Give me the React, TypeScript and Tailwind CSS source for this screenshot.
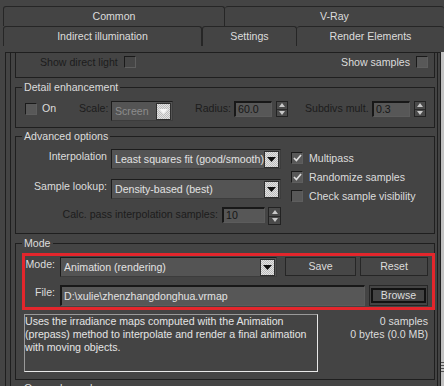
import type { ReactNode } from 'react';

const line = 'border-[#1f1f1f]';

const Tab = ({ children, className }: { children: ReactNode; className: string }) => (
  <div
    className={`flex h-[20px] items-center justify-center rounded-t-[3px] border-t border-[#262626] ${className}`}
  >
    {children}
  </div>
);

const Check = ({ checked, dim }: { checked?: boolean; dim?: boolean }) => (
  <span
    className={`flex h-[12px] w-[12px] shrink-0 items-center justify-center border border-b-[#5e5e5e] border-l-[#1a1a1a] border-r-[#5e5e5e] border-t-[#1a1a1a] ${
      dim ? 'bg-[#464646]' : 'bg-[#585858]'
    }`}
  >
    {checked && (
      <svg width="9" height="8" viewBox="0 0 9 8">
        <path d="M1 4 L3.4 6.5 L8 1" fill="none" stroke="#dedede" strokeWidth="1.7" />
      </svg>
    )}
  </span>
);

const DropBtn = ({ disabled }: { disabled?: boolean }) => (
  <span className="flex h-[17px] w-[15px] shrink-0 items-center justify-center border border-[#2e2e2e] bg-[image:repeating-conic-gradient(#bcbcbc_0_25%,#e4e4e4_0_50%)] bg-[length:2px_2px]">
    <svg width="9" height="5" viewBox="0 0 9 5">
      <path d="M0 0H9L4.5 5Z" fill={disabled ? '#f6f6f6' : '#101010'} />
    </svg>
  </span>
);

const Select = ({ text, className, disabled }: { text: string; className: string; disabled?: boolean }) => (
  <div
    className={`flex h-[20px] shrink-0 items-center border border-b-[#3c3c3c] border-l-[#1c1c1c] border-r-[#3c3c3c] border-t-[#1c1c1c] bg-[#545454] pl-[3px] pr-[1px] ${className}`}
  >
    <span
      className={`min-w-0 flex-1 overflow-hidden whitespace-nowrap ${disabled ? 'text-[#8c8c8c]' : 'text-[#e2e2e2]'}`}
    >
      {text}
    </span>
    <DropBtn disabled={disabled} />
  </div>
);

const Field = ({ text, className, dark }: { text: string; className: string; dark?: boolean }) => (
  <div
    className={`flex shrink-0 items-center overflow-hidden whitespace-nowrap border-b border-l-2 border-r border-t-2 border-b-[#5c5c5c] border-l-[#181818] border-r-[#5c5c5c] border-t-[#181818] bg-[#575757] pl-[2px] ${
      dark ? 'text-[#161616]' : 'text-[#e2e2e2]'
    } ${className}`}
  >
    {text}
  </div>
);

const Spinner = ({ className }: { className: string }) => (
  <div className={`flex shrink-0 flex-col border border-[#222] bg-[#4a4a4a] ${className}`}>
    <span className="flex flex-1 items-center justify-center border-b border-[#2a2a2a]">
      <svg width="6" height="4" viewBox="0 0 6 4">
        <path d="M0 4H6L3 0Z" fill="#c8c8c8" />
      </svg>
    </span>
    <span className="flex flex-1 items-center justify-center">
      <svg width="6" height="4" viewBox="0 0 6 4">
        <path d="M0 0H6L3 4Z" fill="#c8c8c8" />
      </svg>
    </span>
  </div>
);

const Button = ({ children, className }: { children: ReactNode; className: string }) => (
  <div
    className={`flex h-[19px] shrink-0 items-center justify-center border border-[#262626] bg-[#474747] ${className}`}
  >
    {children}
  </div>
);

const Group = ({ title, className, children }: { title: string; className: string; children?: ReactNode }) => (
  <fieldset className={`shrink-0 border ${line} ${className}`}>
    <legend className="ml-[6px] px-[2px] leading-[13px]">{title}</legend>
    {children}
  </fieldset>
);

export default function App() {
  return (
    <div className="flex h-[386px] w-[444px] flex-col overflow-hidden bg-[#444444] font-['Liberation_Sans',Arial,sans-serif] text-[10.6px] leading-[13px] text-[#dcdcdc]">
      <div className="flex h-[26px] items-end pl-[3px]">
        <Tab className="w-[222px] border-l border-r">Common</Tab>
        <Tab className="flex-1">V-Ray</Tab>
      </div>
      <div className="flex h-[20px] pl-[3px]">
        <Tab className="w-[199px] border-l border-r">Indirect illumination</Tab>
        <Tab className="w-[95px] border-l border-r">Settings</Tab>
        <Tab className="flex-1">Render Elements</Tab>
      </div>

      <div className="mt-[6px] flex min-h-0 flex-1 pl-[5px]">
        <div className={`flex min-w-0 flex-1 border-l border-r border-t ${line} pl-[4px] pr-[2px]`}>
          <div className={`flex min-w-0 flex-1 flex-col overflow-hidden border-l border-r ${line} pl-[4px] pr-[2px]`}>
            {/* group scrolled past the top */}
            <div className={`flex h-[25px] shrink-0 justify-between border-b border-l border-r ${line} pt-[3px]`}>
              <div className="flex h-[12px] items-center pl-[24px]">
                <span className="w-[78px] whitespace-nowrap text-[#1c1c1c]">Show direct light</span>
                <span className="ml-[6px]">
                  <Check dim />
                </span>
              </div>
              <div className="flex h-[12px] items-center pr-[6px]">
                <span className="whitespace-nowrap">Show samples</span>
                <span className="ml-[6px]">
                  <Check />
                </span>
              </div>
            </div>

            <Group title="Detail enhancement" className="mt-[3px] pb-[6px] pt-[7px]">
              <div className="flex h-[20px] items-start pl-[9px]">
                <span className="mt-[2px]">
                  <Check />
                </span>
                <span className="ml-[5px] mt-[1px] w-[37px]">On</span>
                <span className="mt-[1px] w-[28px] text-[#1c1c1c]">Scale:</span>
                <Select text="Screen" disabled className="ml-[4px] w-[62px]" />
                <span className="ml-[22px] mt-[1px] w-[35px] whitespace-nowrap text-[#1c1c1c]">Radius:</span>
                <Field text="60.0" dark className="ml-[4px] h-[16px] w-[38px]" />
                <Spinner className="ml-[4px] h-[16px] w-[12px]" />
                <span className="ml-[17px] mt-[1px] w-[63px] whitespace-nowrap text-[#1c1c1c]">Subdivs mult.</span>
                <Field text="0.3" dark className="ml-[4px] h-[16px] w-[38px]" />
                <Spinner className="ml-[4px] h-[16px] w-[12px]" />
              </div>
            </Group>

            <Group title="Advanced options" className="mt-[2px] pb-[8px] pt-[6px]">
              <div className="flex">
                <div className="flex w-[265px] shrink-0 flex-col">
                  <div className="flex items-start">
                    <span className="w-[91px] whitespace-nowrap pt-[1px] text-right">Interpolation</span>
                    <Select text="Least squares fit (good/smooth)" className="ml-[4px] w-[170px]" />
                  </div>
                  <div className="mt-[10px] flex items-start">
                    <span className="w-[91px] whitespace-nowrap pt-[1px] text-right">Sample lookup:</span>
                    <Select text="Density-based (best)" className="ml-[4px] w-[170px]" />
                  </div>
                  <div className="mt-[8px] flex items-start">
                    <span className="w-[202px] whitespace-nowrap pt-[1px] text-right text-[#1c1c1c]">
                      Calc. pass interpolation samples:
                    </span>
                    <Field text="10" dark className="ml-[4px] h-[16px] w-[43px]" />
                    <Spinner className="ml-[3px] h-[18px] w-[13px]" />
                  </div>
                </div>
                <div className="ml-[10px] flex flex-col gap-[7px] pt-[3px]">
                  {[
                    ['Multipass', true],
                    ['Randomize samples', true],
                    ['Check sample visibility', false],
                  ].map(([label, on]) => (
                    <div key={label as string} className="flex h-[12px] items-center">
                      <Check checked={on as boolean} />
                      <span className="ml-[6px] whitespace-nowrap">{label}</span>
                    </div>
                  ))}
                </div>
              </div>
            </Group>

            <Group title="Mode" className="mt-[3px] pb-[7px] pt-[3px]">
              <div className="ml-[6px] mr-[-1px] border-[3px] border-[#e3262c] pb-[1px] pt-[1px]">
                <div className="flex items-start">
                  <span className="w-[30px] pt-[1px] text-right">Mode:</span>
                  <Select text="Animation (rendering)" className="ml-[5px] w-[217px]" />
                  <Button className="ml-[8px] w-[71px]">Save</Button>
                  <Button className="ml-[4px] w-[68px]">Reset</Button>
                </div>
                <div className="mt-[8px] flex items-start">
                  <span className="w-[30px] pt-[1px] text-right">File:</span>
                  <Field text={'D:\\xulie\\zhenzhangdonghua.vrmap'} className="ml-[5px] h-[21px] w-[305px]" />
                  <div className="ml-[4px] flex h-[21px] w-[59px] shrink-0 border border-[#262626] px-[1px] pb-[2px] pt-[2px]">
                    <div className="flex flex-1 items-center justify-center border-2 border-[#121212]">Browse</div>
                  </div>
                </div>
              </div>
              <div className="mt-[4px] flex">
                <div className="ml-[8px] h-[58px] w-[294px] shrink-0 border border-b-[#e8e8e8] border-l-[#9a9a9a] border-r-[#e8e8e8] border-t-[#9a9a9a] text-[#e4e4e4]">
                  Uses the irradiance maps computed with the Animation (prepass) method to interpolate and render a final
                  animation with moving objects.
                </div>
                <div className="flex flex-1 flex-col items-end pr-[6px] pt-[1px]">
                  <span>0 samples</span>
                  <span>0 bytes (0.0 MB)</span>
                </div>
              </div>
            </Group>

            <Group title="On render end" className="mt-[2px] h-[40px]" />
          </div>
        </div>
        <div className="flex w-[3px] flex-col justify-end gap-[2px] bg-[#c2c2c2] pb-[14px]">
          <span className="h-px bg-[#555]" />
          <span className="h-px bg-[#555]" />
          <span className="h-px bg-[#555]" />
          <span className="h-px bg-[#555]" />
        </div>
      </div>
    </div>
  );
}
